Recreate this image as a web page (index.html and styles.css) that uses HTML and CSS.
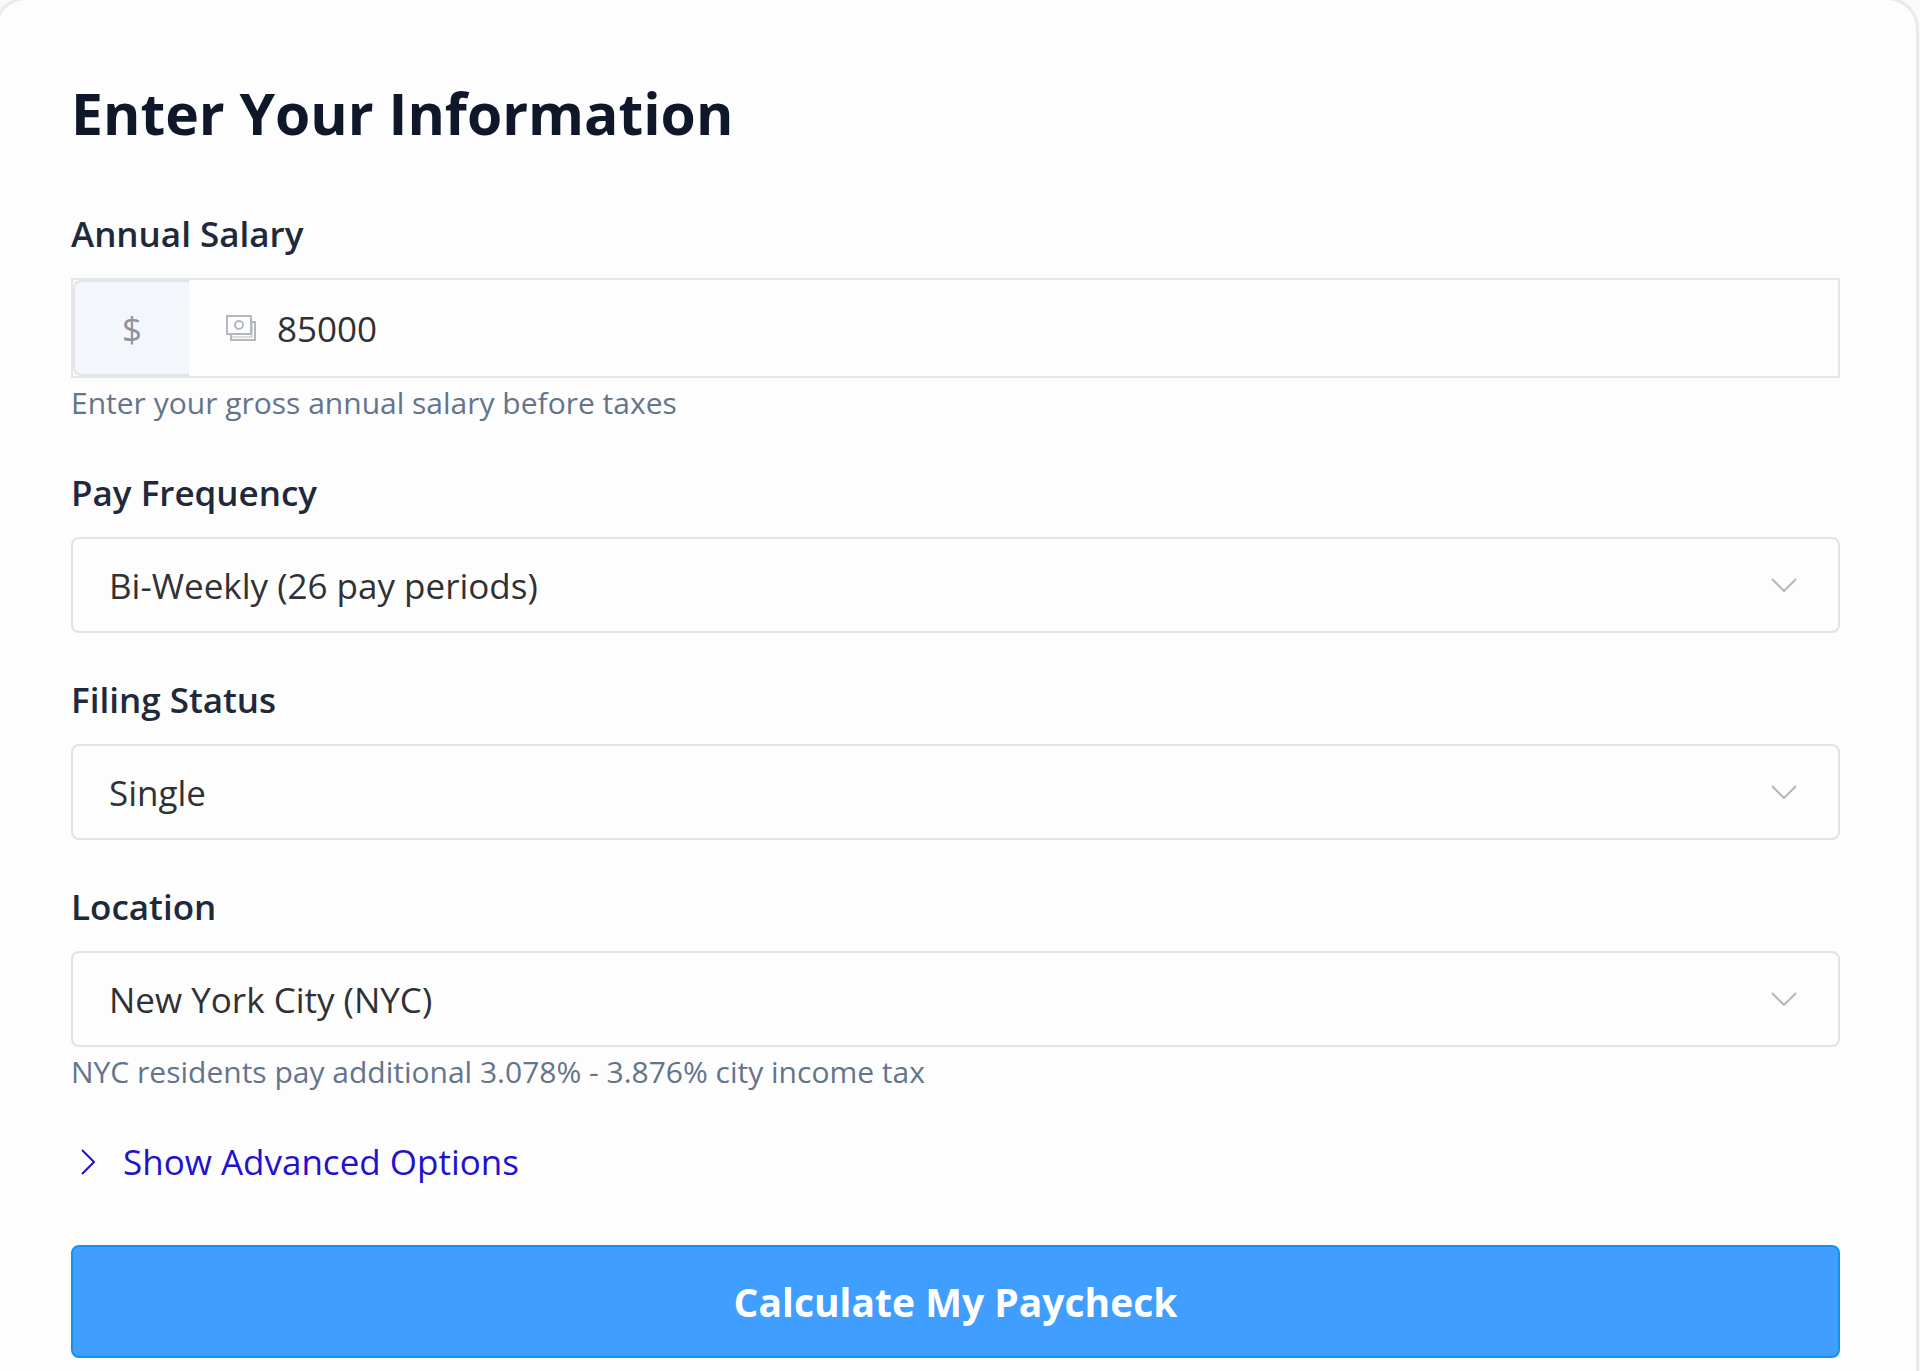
FILE: index.html
```html
<!DOCTYPE html>
<html lang="en">
<head>
<meta charset="utf-8">
<meta name="viewport" content="width=device-width, initial-scale=1">
<title>Paycheck Calculator</title>
<link rel="stylesheet" href="styles.css">
</head>
<body>
<main class="card">
  <h1 class="title">Enter Your Information</h1>
  <form class="form">
    <div class="field">
      <label class="label" for="salary">Annual Salary</label>
      <div class="money">
        <span class="prefix">$</span>
        <div class="money-body">
          <svg class="cash" viewBox="0 0 32 28" fill="none" stroke="#b4b7bd" stroke-width="2" aria-hidden="true">
            <path d="M2 2h24v18H2z"/><circle cx="14" cy="11" r="4"/><path d="M26 8h4v18H6v-6"/><path d="M6 23h21V8" stroke-width="1"/>
          </svg>
          <input class="money-input" id="salary" type="text" inputmode="numeric" value="85000">
        </div>
      </div>
      <p class="help">Enter your gross annual salary before taxes</p>
    </div>
    <div class="field">
      <label class="label" for="frequency">Pay Frequency</label>
      <div class="select-wrap">
        <select class="select" id="frequency"><option>Bi-Weekly (26 pay periods)</option></select>
        <svg class="chevron" viewBox="0 0 26 14" aria-hidden="true"><path d="M1 1l12 12L25 1"/></svg>
      </div>
    </div>
    <div class="field">
      <label class="label" for="status">Filing Status</label>
      <div class="select-wrap">
        <select class="select" id="status"><option>Single</option></select>
        <svg class="chevron" viewBox="0 0 26 14" aria-hidden="true"><path d="M1 1l12 12L25 1"/></svg>
      </div>
    </div>
    <div class="field">
      <label class="label" for="location">Location</label>
      <div class="select-wrap">
        <select class="select" id="location"><option>New York City (NYC)</option></select>
        <svg class="chevron" viewBox="0 0 26 14" aria-hidden="true"><path d="M1 1l12 12L25 1"/></svg>
      </div>
      <p class="help">NYC residents pay additional 3.078% - 3.876% city income tax</p>
    </div>
    <button class="advanced" type="button">
      <svg class="arrow" viewBox="0 0 14 26" aria-hidden="true"><path d="M1 1l12 12L1 25"/></svg>
      Show Advanced Options
    </button>
    <button class="submit" type="submit">Calculate My Paycheck</button>
  </form>
</main>
</body>
</html>
```
FILE: styles.css
```css
* {
  box-sizing: border-box;
}

body {
  margin: 0;
  background: #f8fafc;
  color: #303133;
  font-family: "Segoe UI", "Open Sans", "Noto Sans", sans-serif;
  overflow: hidden;
}

.card {
  min-height: 100vh;
  margin: -3px 1px 0 -6px;
  padding: 73px 76px 13px 74px;
  border: 3px solid #e8eaeb;
  border-bottom: 0;
  border-radius: 32px 32px 0 0;
  background: #fdfdfd;
}

.title {
  margin: 0 0 53px;
  color: #0f172a;
  font-size: 57px;
  font-weight: 700;
  line-height: 80px;
}

.form {
  display: flex;
  flex-direction: column;
}

.field {
  display: flex;
  flex-direction: column;
  margin-bottom: 39px;
}

.label {
  margin-bottom: 16px;
  color: #1e293b;
  font-size: 35px;
  font-weight: 600;
  line-height: 56px;
}

.money {
  display: flex;
  height: 100px;
  border: 2px solid #e4e6e8;
}

.prefix {
  display: flex;
  align-items: center;
  justify-content: center;
  width: 116px;
  border: 2px solid #e1e4e8;
  border-right: 0;
  border-radius: 8px 0 0 8px;
  background: #f3f6fb;
  color: #909399;
  font-size: 35px;
}

.money-body {
  display: flex;
  flex: 1;
  align-items: center;
  gap: 20px;
  padding: 0 36px;
}

.cash {
  width: 32px;
  height: 28px;
}

.money-input {
  flex: 1;
  min-width: 0;
  height: 92px;
  padding: 0;
  border: 0;
  outline: 0;
  background: transparent;
  color: #303133;
  font: inherit;
  font-size: 35px;
}

.help {
  margin: 2px 0 0;
  color: #64748b;
  font-size: 30px;
  line-height: 46px;
}

.select-wrap {
  display: grid;
  align-items: center;
}

.select {
  grid-area: 1 / 1;
  width: 100%;
  height: 96px;
  padding: 0 80px 0 36px;
  border: 2px solid #e0e2e5;
  border-radius: 8px;
  appearance: none;
  background: transparent;
  color: #303133;
  font: inherit;
  font-size: 35px;
}

.chevron {
  grid-area: 1 / 1;
  justify-self: end;
  width: 26px;
  height: 14px;
  margin-right: 43px;
  pointer-events: none;
}

.chevron path {
  fill: none;
  stroke: #b4b6ba;
  stroke-width: 2;
}

.advanced {
  display: flex;
  align-items: center;
  align-self: flex-start;
  gap: 28px;
  margin-bottom: 55px;
  padding: 0 10px;
  border: 0;
  background: none;
  color: #1f12cf;
  font: inherit;
  font-size: 35px;
  line-height: 56px;
}

.arrow {
  width: 14px;
  height: 26px;
}

.arrow path {
  fill: none;
  stroke: currentColor;
  stroke-width: 2;
}

.submit {
  height: 113px;
  border: 2px solid #1890f0;
  border-radius: 8px;
  background: #409eff;
  color: #fff;
  font: inherit;
  font-size: 39px;
  font-weight: 700;
}
```
